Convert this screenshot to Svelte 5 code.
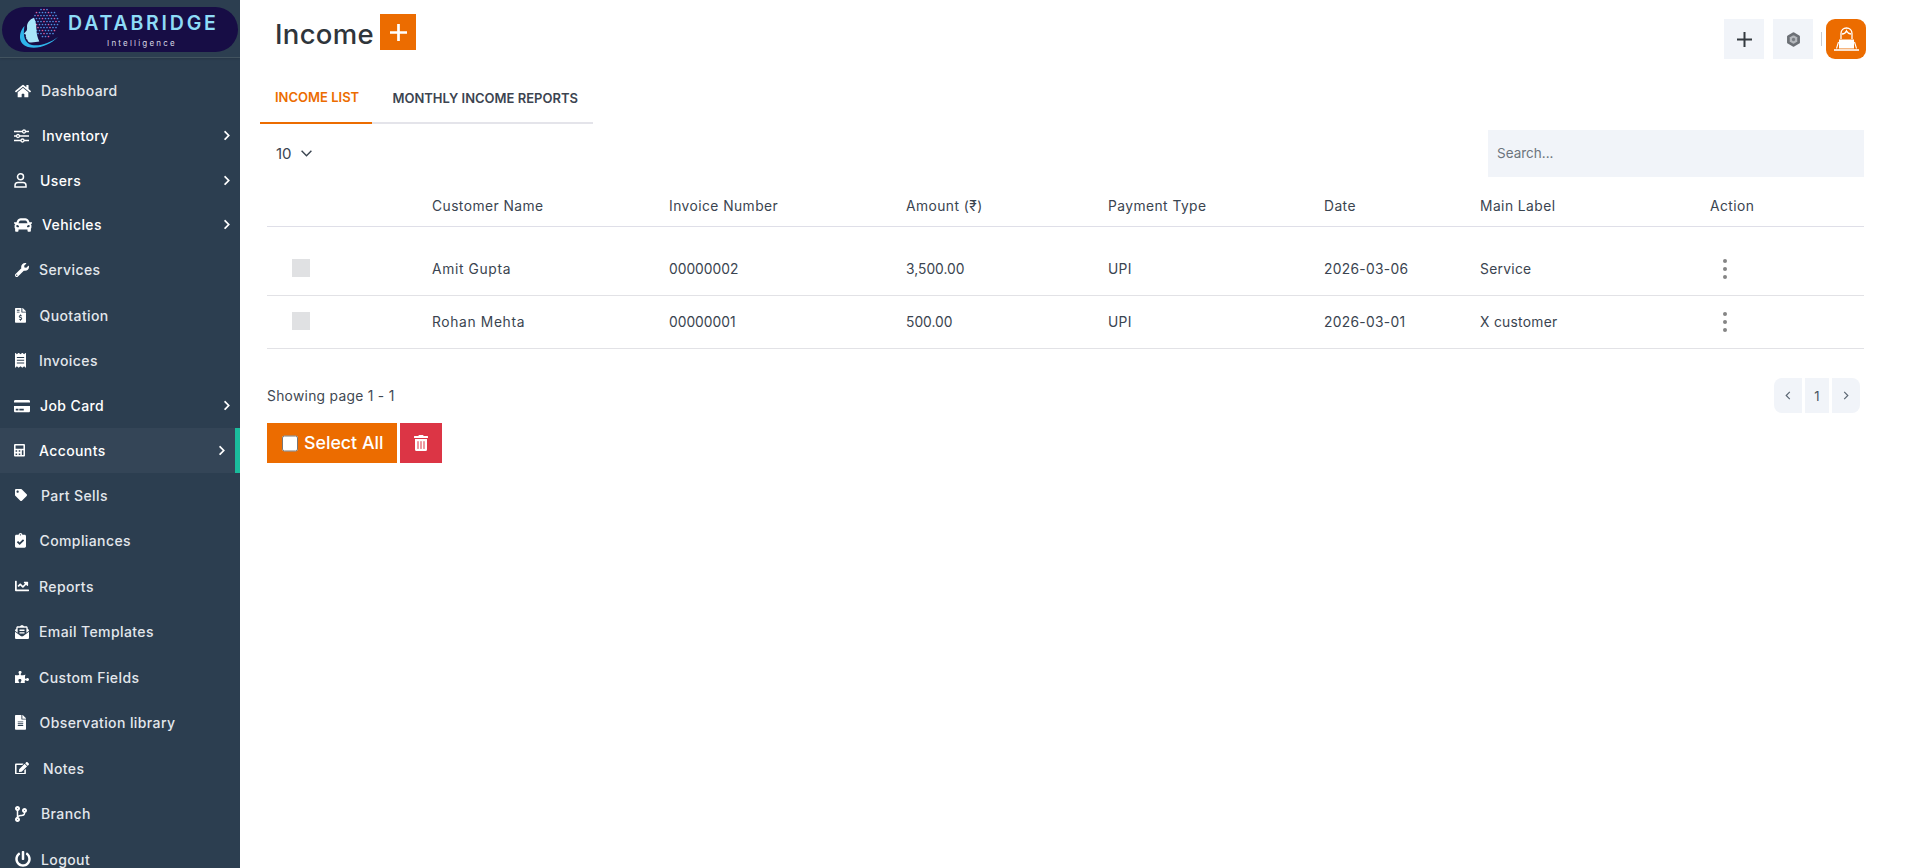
<script>
  const P = {
    home: ['0 0 576 512', 'M280.37 148.26L96 300.11V464a16 16 0 0 0 16 16l112.06-.29a16 16 0 0 0 15.92-16V368a16 16 0 0 1 16-16h64a16 16 0 0 1 16 16v95.64a16 16 0 0 0 16 16.05L464 480a16 16 0 0 0 16-16V300L295.67 148.26a12.19 12.19 0 0 0-15.3 0zM571.6 251.47L488 182.56V44.05a12 12 0 0 0-12-12h-56a12 12 0 0 0-12 12v72.61L318.47 43a48 48 0 0 0-61 0L4.34 251.47a12 12 0 0 0-1.6 16.9l25.5 31A12 12 0 0 0 45.15 301l235.22-193.74a12.19 12.19 0 0 1 15.3 0L530.9 301a12 12 0 0 0 16.9-1.6l25.5-31a12 12 0 0 0-1.7-16.93z'],
    car: ['0 0 512 512', 'M499.99 176h-59.87l-16.64-41.6C406.38 91.63 365.57 64 319.5 64h-127c-46.06 0-86.88 27.63-103.99 70.4L71.87 176H12.01C4.2 176-1.53 183.34.37 190.91l6 24C7.7 220.25 12.5 224 18.01 224h20.07C24.65 235.73 16 252.78 16 272v48c0 16.12 6.16 30.67 16 41.93V416c0 17.67 14.33 32 32 32h32c17.67 0 32-14.33 32-32v-32h256v32c0 17.67 14.33 32 32 32h32c17.67 0 32-14.33 32-32v-54.07c9.84-11.25 16-25.8 16-41.93v-48c0-19.22-8.65-36.27-22.07-48H494c5.51 0 10.31-3.75 11.64-9.09l6-24c1.89-7.57-3.84-14.91-11.65-14.91zm-352.06-17.83c7.29-18.22 24.94-30.17 44.57-30.17h127c19.63 0 37.28 11.95 44.57 30.17L384 208H128l19.93-49.83zM96 319.8c-19.2 0-32-12.76-32-31.9S76.8 256 96 256s48 28.71 48 47.85-28.8 15.95-48 15.95zm320 0c-19.2 0-48 3.19-48-15.95S396.8 256 416 256s32 12.76 32 31.9-12.8 31.9-32 31.9z'],
    wrench: ['0 0 512 512', 'M507.73 109.1c-2.24-9.03-13.54-12.09-20.12-5.51l-74.36 74.36-67.88-11.31-11.31-67.88 74.36-74.36c6.62-6.62 3.43-17.9-5.66-20.16-47.38-11.74-99.55.91-136.58 37.93-39.64 39.64-50.55 97.1-34.05 147.2L18.74 402.76c-24.99 24.99-24.99 65.51 0 90.5 24.99 24.99 65.51 24.99 90.5 0l213.21-213.21c50.12 16.71 107.47 5.68 147.37-34.22 37.07-37.07 49.7-89.32 37.91-136.73zM64 472c-13.25 0-24-10.75-24-24 0-13.26 10.75-24 24-24s24 10.74 24 24c0 13.25-10.75 24-24 24z'],
    quote: ['0 0 384 512', 'M377 105L279.1 7c-4.5-4.5-10.6-7-17-7H256v128h128v-6.1c0-6.3-2.5-12.4-7-16.9zm-153 31V0H24C10.7 0 0 10.7 0 24v464c0 13.3 10.7 24 24 24h336c13.3 0 24-10.7 24-24V160H248c-13.2 0-24-10.8-24-24zM64 72c0-4.42 3.58-8 8-8h80c4.42 0 8 3.58 8 8v16c0 4.42-3.58 8-8 8H72c-4.42 0-8-3.58-8-8V72zm0 80v-16c0-4.42 3.58-8 8-8h80c4.42 0 8 3.58 8 8v16c0 4.42-3.58 8-8 8H72c-4.42 0-8-3.58-8-8zm144 263.88V440c0 4.42-3.58 8-8 8h-16c-4.42 0-8-3.58-8-8v-24.29c-11.29-.58-22.27-4.52-31.37-11.35-3.9-2.93-4.1-8.77-.57-12.14l11.75-11.21c2.77-2.64 6.89-2.76 10.13-.73 3.87 2.42 8.26 3.72 12.82 3.72h28.11c6.5 0 11.8-5.92 11.8-13.19 0-5.95-3.61-11.19-8.77-12.73l-45-13.5c-18.59-5.58-31.58-23.42-31.58-43.39 0-24.52 19.05-44.44 42.67-45.07V232c0-4.42 3.58-8 8-8h16c4.42 0 8 3.58 8 8v24.29c11.29.58 22.27 4.51 31.37 11.35 3.9 2.93 4.1 8.77.57 12.14l-11.75 11.21c-2.77 2.64-6.89 2.76-10.13.73-3.87-2.43-8.26-3.72-12.82-3.72h-28.11c-6.5 0-11.8 5.92-11.8 13.19 0 5.95 3.61 11.19 8.77 12.73l45 13.5c18.59 5.58 31.58 23.42 31.58 43.39 0 24.53-19.05 44.44-42.67 45.07z'],
    receipt: ['0 0 384 512', 'M358.4 3.2L320 48 265.6 3.2a15.9 15.9 0 0 0-19.2 0L192 48 137.6 3.2a15.9 15.9 0 0 0-19.2 0L64 48 25.6 3.2C15-4.7 0 2.8 0 16v480c0 13.2 15 20.7 25.6 12.8L64 464l54.4 44.8a15.9 15.9 0 0 0 19.2 0L192 464l54.4 44.8a15.9 15.9 0 0 0 19.2 0L320 464l38.4 44.8c10.5 7.9 25.6.4 25.6-12.8V16c0-13.2-15-20.7-25.6-12.8zM320 360c0 4.4-3.6 8-8 8H72c-4.4 0-8-3.6-8-8v-16c0-4.4 3.6-8 8-8h240c4.4 0 8 3.6 8 8v16zm0-96c0 4.4-3.6 8-8 8H72c-4.4 0-8-3.6-8-8v-16c0-4.4 3.6-8 8-8h240c4.4 0 8 3.6 8 8v16zm0-96c0 4.4-3.6 8-8 8H72c-4.4 0-8-3.6-8-8v-16c0-4.4 3.6-8 8-8h240c4.4 0 8 3.6 8 8v16z'],
    card: ['0 0 576 512', 'M0 432c0 26.5 21.5 48 48 48h480c26.5 0 48-21.5 48-48V256H0v176zm192-68c0-6.6 5.4-12 12-12h136c6.6 0 12 5.4 12 12v40c0 6.6-5.4 12-12 12H204c-6.6 0-12-5.4-12-12v-40zm-128 0c0-6.6 5.4-12 12-12h72c6.6 0 12 5.4 12 12v40c0 6.6-5.4 12-12 12H76c-6.6 0-12-5.4-12-12v-40zM576 80v48H0V80c0-26.5 21.5-48 48-48h480c26.5 0 48 21.5 48 48z'],
    calc: ['0 0 448 512', 'M400 0H48C22.4 0 0 22.4 0 48v416c0 25.6 22.4 48 48 48h352c25.6 0 48-22.4 48-48V48c0-25.6-22.4-48-48-48zM128 435.2c0 6.4-6.4 12.8-12.8 12.8H76.8c-6.4 0-12.8-6.4-12.8-12.8v-38.4c0-6.4 6.4-12.8 12.8-12.8h38.4c6.4 0 12.8 6.4 12.8 12.8v38.4zm0-128c0 6.4-6.4 12.8-12.8 12.8H76.8c-6.4 0-12.8-6.4-12.8-12.8v-38.4c0-6.4 6.4-12.8 12.8-12.8h38.4c6.4 0 12.8 6.4 12.8 12.8v38.4zm128 128c0 6.4-6.4 12.8-12.8 12.8h-38.4c-6.4 0-12.8-6.4-12.8-12.8v-38.4c0-6.4 6.4-12.8 12.8-12.8h38.4c6.4 0 12.8 6.4 12.8 12.8v38.4zm0-128c0 6.4-6.4 12.8-12.8 12.8h-38.4c-6.4 0-12.8-6.4-12.8-12.8v-38.4c0-6.4 6.4-12.8 12.8-12.8h38.4c6.4 0 12.8 6.4 12.8 12.8v38.4zm128 128c0 6.4-6.4 12.8-12.8 12.8h-38.4c-6.4 0-12.8-6.4-12.8-12.8V268.8c0-6.4 6.4-12.8 12.8-12.8h38.4c6.4 0 12.8 6.4 12.8 12.8v166.4zm0-256c0 6.4-6.4 12.8-12.8 12.8H76.8c-6.4 0-12.8-6.4-12.8-12.8V76.8C64 70.4 70.4 64 76.8 64h294.4c6.4 0 12.8 6.4 12.8 12.8v102.4z'],
    tag: ['0 0 512 512', 'M0 252.118V48C0 21.49 21.49 0 48 0h204.118a48 48 0 0 1 33.941 14.059l211.882 211.882c18.745 18.745 18.745 49.137 0 67.882L293.823 497.941c-18.745 18.745-49.137 18.745-67.882 0L14.059 286.059A48 48 0 0 1 0 252.118zM112 64c-26.51 0-48 21.49-48 48s21.49 48 48 48 48-21.49 48-48-21.49-48-48-48z'],
    clip: ['0 0 384 512', 'M336 64h-80c0-35.3-28.7-64-64-64s-64 28.7-64 64H48C21.5 64 0 85.5 0 112v352c0 26.5 21.5 48 48 48h288c26.5 0 48-21.5 48-48V112c0-26.5-21.5-48-48-48zM192 40c13.3 0 24 10.7 24 24s-10.7 24-24 24-24-10.7-24-24 10.7-24 24-24zm121.2 231.8l-143 141.8c-4.7 4.7-12.3 4.6-17-.1l-82.6-83.3c-4.7-4.7-4.6-12.3.1-17L99.1 285c4.7-4.7 12.3-4.6 17 .1l46 46.4 106-105.2c4.7-4.7 12.3-4.6 17 .1l28.2 28.4c4.7 4.8 4.6 12.3-.1 17z'],
    chart: ['0 0 512 512', 'M496 384H64V80c0-8.84-7.16-16-16-16H16C7.16 64 0 71.16 0 80v336c0 17.67 14.33 32 32 32h464c8.84 0 16-7.16 16-16v-32c0-8.84-7.16-16-16-16zM464 96H345.94c-21.38 0-32.09 25.85-16.97 40.97l32.4 32.4L288 242.75l-73.37-73.37c-12.5-12.5-32.76-12.5-45.25 0l-68.69 68.69c-6.25 6.25-6.25 16.38 0 22.63l22.62 22.62c6.25 6.25 16.38 6.25 22.63 0L192 237.25l73.37 73.37c12.5 12.5 32.76 12.5 45.25 0l96-96 32.4 32.4c15.12 15.12 40.97 4.41 40.97-16.97V112c0-8.84-7.16-16-16-16z'],
    mail: ['0 0 512 512', 'M176 216h160c8.84 0 16-7.16 16-16v-16c0-8.84-7.16-16-16-16H176c-8.84 0-16 7.16-16 16v16c0 8.84 7.16 16 16 16zm-16 80c0 8.84 7.16 16 16 16h160c8.84 0 16-7.16 16-16v-16c0-8.84-7.16-16-16-16H176c-8.84 0-16 7.16-16 16v16zm96 121.13c-16.42 0-32.84-5.06-46.86-15.19L0 250.86V464c0 26.51 21.49 48 48 48h416c26.51 0 48-21.49 48-48V250.86L302.86 401.94c-14.02 10.12-30.44 15.19-46.86 15.19zm237.61-254.18c-8.85-6.94-17.24-13.47-29.61-22.81V96c0-26.51-21.49-48-48-48h-77.55c-3.04-2.2-5.87-4.26-9.04-6.56C312.6 29.17 279.2-.35 256 0c-23.2-.35-56.59 29.17-73.41 41.44-3.17 2.3-6 4.36-9.04 6.56H96c-26.51 0-48 21.49-48 48v44.14c-12.37 9.33-20.76 15.87-29.61 22.81A47.995 47.995 0 0 0 0 200.72v10.65l96 69.35V96h320v184.72l96-69.35v-10.65c0-14.74-6.78-28.67-18.39-37.77z'],
    puzzle: ['0 0 576 512', 'M519.442 288.651c-41.519 0-59.5 31.593-82.058 31.593C377.409 320.244 432 144 432 144s-196.288 80-196.288-3.297c0-35.827 36.288-46.25 36.288-85.985C272 19.216 243.885 0 210.539 0c-34.654 0-66.366 18.891-66.366 56.346 0 41.364 31.711 59.277 31.711 81.75C175.885 207.719 0 166.758 0 166.758v333.237s178.635 41.047 178.635-28.662c0-22.473-40-40.107-40-81.471 0-37.456 29.25-56.346 63.577-56.346 33.673 0 61.788 19.216 61.788 54.717 0 39.735-36.288 50.158-36.288 85.985 0 60.803 129.675 25.73 181.23 25.73 0 0-34.725-120.101 25.827-120.101 35.962 0 46.423 36.152 86.308 36.152C556.712 416 576 387.99 576 354.443c0-34.199-18.962-65.792-56.558-65.792z'],
    file: ['0 0 384 512', 'M224 136V0H24C10.7 0 0 10.7 0 24v464c0 13.3 10.7 24 24 24h336c13.3 0 24-10.7 24-24V160H248c-13.2 0-24-10.8-24-24zm64 236c0 6.6-5.4 12-12 12H108c-6.6 0-12-5.4-12-12v-8c0-6.6 5.4-12 12-12h168c6.6 0 12 5.4 12 12v8zm0-64c0 6.6-5.4 12-12 12H108c-6.6 0-12-5.4-12-12v-8c0-6.6 5.4-12 12-12h168c6.6 0 12 5.4 12 12v8zm0-72v8c0 6.6-5.4 12-12 12H108c-6.6 0-12-5.4-12-12v-8c0-6.6 5.4-12 12-12h168c6.6 0 12 5.4 12 12zm96-114.1v6.1H256V0h6.1c6.4 0 12.5 2.5 17 7l97.9 98c4.5 4.5 7 10.6 7 16.9z'],
    edit: ['0 0 576 512', 'M402.6 83.2l90.2 90.2c3.8 3.8 3.8 10 0 13.8L274.4 405.6l-92.8 10.3c-12.4 1.4-22.9-9.1-21.5-21.5l10.3-92.8L388.8 83.2c3.8-3.8 10-3.8 13.8 0zm162-22.9l-48.8-48.8c-15.2-15.2-39.9-15.2-55.2 0l-35.4 35.4c-3.8 3.8-3.8 10 0 13.8l90.2 90.2c3.8 3.8 10 3.8 13.8 0l35.4-35.4c15.2-15.3 15.2-40 0-55.2zM384 346.2V448H64V128h229.8c3.2 0 6.2-1.3 8.5-3.5l40-40c7.6-7.6 2.2-20.5-8.5-20.5H48C21.5 64 0 85.5 0 112v352c0 26.5 21.5 48 48 48h352c26.5 0 48-21.5 48-48V306.2c0-10.7-12.9-16-20.5-8.5l-40 40c-2.2 2.3-3.5 5.3-3.5 8.5z'],
    branch: ['0 0 384 512', 'M384 144c0-44.2-35.8-80-80-80s-80 35.8-80 80c0 36.4 24.3 67.1 57.5 76.8-.6 16.1-4.2 28.5-11 36.9-15.4 19.2-49.3 22.4-85.2 25.7-28.2 2.6-57.4 5.4-81.3 16.9v-144c32.5-10.2 56-40.5 56-76.3 0-44.2-35.8-80-80-80S0 35.8 0 80c0 35.8 23.5 66.1 56 76.3v199.3C23.5 365.9 0 396.2 0 432c0 44.2 35.8 80 80 80s80-35.8 80-80c0-34-21.2-63.1-51.2-74.6 3.1-5.2 7.8-9.8 14.9-13.4 16.2-8.2 40.4-10.4 66.1-12.8 42.2-3.9 90-8.4 118.2-43.4 14-17.4 21.1-39.8 21.6-67.9 31.6-10.8 54.4-40.7 54.4-75.9zM80 64c8.8 0 16 7.2 16 16s-7.2 16-16 16-16-7.2-16-16 7.2-16 16-16zm0 384c-8.8 0-16-7.2-16-16s7.2-16 16-16 16 7.2 16 16-7.2 16-16 16zm224-320c8.8 0 16 7.2 16 16s-7.2 16-16 16-16-7.2-16-16 7.2-16 16-16z'],
    power: ['0 0 512 512', 'M400 54.1c63 45 104 118.6 104 201.9 0 136.8-110.8 247.7-247.5 248C120 504.3 8.2 393 8 256.4 7.9 173.1 48.9 99.3 111.8 54.2c11.7-8.3 28-4.8 35 7.7L162.6 90c5.9 10.5 3.1 23.8-6.6 31-41.5 30.8-68 79.6-68 134.9-.1 92.3 74.5 168.1 168 168.1 91.6 0 168.6-74.2 168-169.1-.3-51.8-24.7-101.8-68.1-134-9.7-7.2-12.4-20.5-6.5-30.9l15.8-28.1c7-12.4 23.2-16.1 34.8-7.8zM296 264V24c0-13.3-10.7-24-24-24h-32c-13.3 0-24 10.7-24 24v240c0 13.3 10.7 24 24 24h32c13.3 0 24-10.7 24-24z'],
  };
  const chevron = 'M285.476 272.971L91.132 467.314c-9.373 9.373-24.569 9.373-33.941 0l-22.667-22.667c-9.357-9.357-9.375-24.522-.04-33.901L188.505 256 34.484 101.255c-9.335-9.379-9.317-24.544.04-33.901l22.667-22.667c9.373-9.373 24.569-9.373 33.941 0L285.475 239.03c9.373 9.372 9.373 24.568.001 33.941z';
  const trash = 'M32 464a48 48 0 0 0 48 48h288a48 48 0 0 0 48-48V128H32zm272-256a16 16 0 0 1 32 0v224a16 16 0 0 1-32 0zm-96 0a16 16 0 0 1 32 0v224a16 16 0 0 1-32 0zm-96 0a16 16 0 0 1 32 0v224a16 16 0 0 1-32 0zM432 32H312l-9.4-18.7A24 24 0 0 0 281.1 0H166.8a23.72 23.72 0 0 0-21.4 13.3L136 32H16A16 16 0 0 0 0 48v32a16 16 0 0 0 16 16h416a16 16 0 0 0 16-16V48a16 16 0 0 0-16-16z';

  const nav = [
    { label: 'Dashboard', icon: 'home', x: 15, w: 16, tx: 41 },
    { label: 'Inventory', icon: 'sliders', x: 14, w: 15, tx: 42, sub: true },
    { label: 'Users', icon: 'user', x: 14, w: 13, tx: 40, sub: true },
    { label: 'Vehicles', icon: 'car', x: 14, w: 18, tx: 42, sub: true },
    { label: 'Services', icon: 'wrench', x: 15, w: 14, tx: 39 },
    { label: 'Quotation', icon: 'quote', x: 15, w: 11, tx: 39.5 },
    { label: 'Invoices', icon: 'receipt', x: 15, w: 11, tx: 39 },
    { label: 'Job Card', icon: 'card', x: 14, w: 16, tx: 40, sub: true },
    { label: 'Accounts', icon: 'calc', x: 14, w: 11, tx: 39, sub: true, active: true },
    { label: 'Part Sells', icon: 'tag', x: 15, w: 12, tx: 41 },
    { label: 'Compliances', icon: 'clip', x: 15, w: 11, tx: 39.5 },
    { label: 'Reports', icon: 'chart', x: 15, w: 14, tx: 39 },
    { label: 'Email Templates', icon: 'mail', x: 15, w: 14, tx: 39 },
    { label: 'Custom Fields', icon: 'puzzle', x: 15, w: 14, tx: 39 },
    { label: 'Observation library', icon: 'file', x: 15, w: 11, tx: 39.5 },
    { label: 'Notes', icon: 'edit', x: 15, w: 14, tx: 43 },
    { label: 'Branch', icon: 'branch', x: 15, w: 12, tx: 41 },
    { label: 'Logout', icon: 'power', x: 15, w: 16, tx: 41 },
  ];

  const headers = ['', 'Customer Name', 'Invoice Number', 'Amount (₹)', 'Payment Type', 'Date', 'Main Label', 'Action'];
  const rows = [
    ['Amit Gupta', '00000002', '3,500.00', 'UPI', '2026-03-06', 'Service'],
    ['Rohan Mehta', '00000001', '500.00', 'UPI', '2026-03-01', 'X customer'],
  ];
  const cellClass = ['name', 'num', 'num', '', '', ''];

  const dots = [];
  for (let r = 0; r < 10; r++) {
    for (let c = 0; c < 10; c++) {
      const x = 32 + c * 3 + (r % 2) * 1.5;
      const y = 9.5 + r * 3;
      const dx = x - 45, dy = y - 23;
      if (dx * dx + dy * dy < 205 && x - 36 > (y - 24) * 0.35 - 2) {
        dots.push({ x, y, pink: (r * 3 + c * 5) % 4 === 0 });
      }
    }
  }
</script>

<div class="app">
  <aside class="sidebar">
    <div class="brand">
      <div class="pill">
        <svg class="mark" viewBox="15 8 60 44" aria-hidden="true">
          {#each dots as d}
            <circle cx={d.x} cy={d.y} r="0.85" fill={d.pink ? '#d9609f' : '#4f8fe0'} />
          {/each}
          <path d="M34 18c-4 1-6.500 4-7 8 0 2 .3 3-.3 4.500l-2.700 3c0 .8 1.500 1 2 1.300-.2 1.200-.5 2 .3 2.700-.3 1 0 1.800 1 2 .5 2.500 1.700 3 4 3 3 0 6-1 8-1-2-4-3-9-3-14 0-4-1-7-2.300-9.500z" fill="#a9e6f9" />
          <path d="M24.500 26C18 33 18 44 28 47c10 2.500 22-2 30-10-8 6-18 9.500-26 8-7-1.500-9.500-9-7.500-19z" fill="#2fb5ea" />
        </svg>
        <div class="wordmark">
          <span class="wm-main">DATABRIDGE</span>
          <span class="wm-sub">Intelligence</span>
        </div>
      </div>
    </div>
    <nav class="nav">
      {#each nav as item}
        <div class="item" class:sub={item.sub} class:active={item.active}>
          <span class="ico" style="margin-left:{item.x}px;width:{item.w}px">
            {#if item.icon === 'sliders'}
              <svg viewBox="0 0 15 14" fill="none" stroke="#fff" stroke-width="1.3">
                <path d="M0 2.500h8.500M11.500 2.500H15M0 7h2.500M5.500 7H15M0 11.500h7M10 11.500h5" />
                <circle cx="10" cy="2.500" r="1.500" /><circle cx="4" cy="7" r="1.500" /><circle cx="8.500" cy="11.500" r="1.500" />
              </svg>
            {:else if item.icon === 'user'}
              <svg viewBox="0 0 13 15" fill="none" stroke="#fff" stroke-width="1.500">
                <circle cx="6.500" cy="3.800" r="3" />
                <path d="M1 14v-1.500C1 10.500 2.500 9.500 4 9.500h5c1.500 0 3 1 3 3V14z" />
              </svg>
            {:else}
              <svg viewBox={P[item.icon][0]} fill="#fff"><path d={P[item.icon][1]} /></svg>
            {/if}
          </span>
          <span class="lbl" style="margin-left:{item.tx - item.x - item.w}px">{item.label}</span>
          {#if item.sub}
            <svg class="chev" viewBox="0 0 320 512" fill="#fff"><path d={chevron} /></svg>
          {/if}
        </div>
      {/each}
    </nav>
  </aside>

  <main class="main">
    <header class="top">
      <h1>Income</h1>
      <button class="add" aria-label="Add income">
        <svg viewBox="0 0 17 17" fill="none" stroke="#fff" stroke-width="2.700"><path d="M8.500 0v17M0 8.500h17" /></svg>
      </button>
      <div class="tools">
        <button class="tool" aria-label="Add">
          <svg viewBox="0 0 15 15" width="15" height="15" fill="none" stroke="#343a40" stroke-width="2"><path d="M7.500 0v15M0 7.500h15" /></svg>
        </button>
        <button class="tool" aria-label="Settings">
          <svg viewBox="0 0 20 20" width="15" height="15">
            <polygon points="10,2.200 16.800,6.100 16.800,13.900 10,17.800 3.200,13.900 3.200,6.100" fill="#b4b7bc" stroke="#6c7076" stroke-width="3.600" stroke-linejoin="round" />
            <circle cx="10" cy="10" r="2.200" fill="#7a7e84" />
          </svg>
        </button>
        <span class="sep"></span>
        <div class="avatar">
          <svg viewBox="0 0 40 40" width="40" height="40">
            <path d="M15 20v-5.500c0-3.500 2.500-5.500 5.500-5.500s5.500 2 5.500 5.500V20" fill="none" stroke="#fff" stroke-width="1.300" />
            <path d="M16 15c2.200 0 3.700-1.200 4.500-3 .8 1.500 2.500 2.700 4.500 3" fill="none" stroke="#fff" stroke-width="1.500" />
            <path d="M13 20.500h15v9H13z" fill="#fff" />
            <path d="M12.500 23l-2 6.500M28.500 23l2 6.500" fill="none" stroke="#fff" stroke-width="1.100" />
            <path d="M8 30.200h25v1.600H8z" fill="#fff" />
          </svg>
        </div>
      </div>
    </header>

    <div class="tabs">
      <button class="tab on">INCOME LIST</button>
      <button class="tab">MONTHLY INCOME REPORTS</button>
    </div>

    <div class="controls">
      <div class="size">
        <span>10</span>
        <svg viewBox="0 0 11 7" width="11" height="7" fill="none" stroke="#3a4450" stroke-width="1.400"><path d="M.6.8l4.900 4.900L10.400.8" /></svg>
      </div>
      <input class="search" placeholder="Search..." />
    </div>

    <table class="tbl">
      <colgroup>
        <col class="c0" /><col class="c1" /><col class="c1" /><col class="c3" /><col class="c4" /><col class="c5" /><col class="c6" /><col />
      </colgroup>
      <thead>
        <tr>{#each headers as h}<th>{h}</th>{/each}</tr>
      </thead>
      <tbody>
        <tr class="spacer"><td colspan="8"></td></tr>
        {#each rows as r}
          <tr>
            <td><input type="checkbox" class="rowcheck" /></td>
            {#each r as v, i}<td class={cellClass[i]}>{v}</td>{/each}
            <td>
              <span class="kebab"><i></i><i></i><i></i></span>
            </td>
          </tr>
        {/each}
      </tbody>
    </table>

    <div class="foot">
      <span class="info">Showing page 1 - 1</span>
      <div class="pager">
        <button class="pg first" aria-label="Previous">
          <svg viewBox="0 0 6 10" width="6" height="9" fill="none" stroke="#5a6672" stroke-width="1.300"><path d="M5 1L1 5l4 4" /></svg>
        </button>
        <button class="pg num">1</button>
        <button class="pg last" aria-label="Next">
          <svg viewBox="0 0 6 10" width="6" height="9" fill="none" stroke="#5a6672" stroke-width="1.300"><path d="M1 1l4 4-4 4" /></svg>
        </button>
      </div>
    </div>

    <div class="actions">
      <label class="selall"><input type="checkbox" /><span>Select All</span></label>
      <button class="del" aria-label="Delete">
        <svg viewBox="0 0 448 512" width="14" height="16" fill="#fff"><path d={trash} /></svg>
      </button>
    </div>
  </main>
</div>

<style>
  :global(body) {
    margin: 0;
    background: #fff;
  }
  .app {
    display: flex;
    height: 100vh;
    overflow: hidden;
    font-family: Inter, "Noto Sans", sans-serif;
    color: #3a4450;
  }
  .sidebar {
    flex: 0 0 240px;
    width: 240px;
    background: #2c3e50;
    overflow: hidden;
    position: relative;
  }
  .brand {
    height: 58px;
    box-sizing: border-box;
    padding: 7px 2px 0;
    border-bottom: 1px solid #42535f;
    box-shadow: 0 1px 2px rgba(0, 0, 0, .12);
  }
  .pill {
    height: 45px;
    border-radius: 23px;
    background: #170d45;
    display: flex;
    align-items: center;
    position: relative;
  }
  .mark {
    width: 60px;
    height: 44px;
    flex: none;
    margin-left: 13px;
  }
  .wordmark {
    display: flex;
    flex-direction: column;
    align-items: center;
    margin-left: -7px;
    width: 148px;
    line-height: 1;
  }
  .wm-main {
    font-size: 19.500px;
    font-weight: 600;
    letter-spacing: 2.800px;
    margin-right: -2.800px;
    color: #8edcf7;
    margin-top: 2px;
    white-space: nowrap;
  }
  .wm-sub {
    font-size: 8px;
    letter-spacing: 2.200px;
    color: #d8d8e4;
    margin-top: 5px;
  }
  .nav {
    padding-top: 10px;
  }
  .item {
    height: 45.500px;
    display: flex;
    align-items: center;
    font-size: 14px;
    font-weight: 450;
    letter-spacing: .4px;
    color: #e3e7ec;
    position: relative;
  }
  .item.sub {
    height: 44.500px;
    color: #fff;
  }
  .item.active {
    background: #344557;
    color: #fff;
  }
  .item.active::after {
    content: "";
    position: absolute;
    right: 0;
    top: 0;
    bottom: 0;
    width: 5px;
    background: #1abc9c;
  }
  .ico {
    display: flex;
    flex: none;
    align-items: center;
    justify-content: center;
  }
  .ico svg {
    width: 100%;
    height: auto;
    max-height: 18px;
    display: block;
  }
  .chev {
    position: absolute;
    right: 9px;
    top: 50%;
    width: 8px;
    height: 11px;
    margin-top: -5.500px;
  }
  .item.active .chev {
    right: 14px;
  }
  .main {
    flex: 1;
    min-width: 0;
    box-sizing: border-box;
    padding: 0 55px 0 20px;
  }
  button {
    border: 0;
    padding: 0;
    font: inherit;
    color: inherit;
    background: none;
  }
  .top {
    display: flex;
    align-items: flex-start;
    padding-top: 14px;
    height: 59px;
    box-sizing: border-box;
  }
  h1 {
    margin: 0 0 0 15px;
    font-size: 27.500px;
    font-weight: 500;
    line-height: 40px;
    letter-spacing: .3px;
    color: #2f353b;
    width: 90px;
  }
  .add {
    width: 36px;
    height: 36px;
    margin-left: 15px;
    background: #ec6c00;
    display: flex;
    align-items: center;
    justify-content: center;
  }
  .add svg {
    width: 17px;
    height: 17px;
  }
  .tools {
    margin-left: auto;
    margin-right: -2px;
    margin-top: 5px;
    display: flex;
    align-items: center;
  }
  .tool {
    width: 40px;
    height: 40px;
    margin-right: 9px;
    background: #f1f4f9;
    display: flex;
    align-items: center;
    justify-content: center;
  }
  .sep {
    width: 1px;
    height: 14px;
    background: #c9ccd1;
    margin: 0 4px 0 -1px;
  }
  .avatar {
    width: 40px;
    height: 40px;
    border-radius: 9px;
    background: #ec6c00;
  }
  .tabs {
    display: flex;
    width: 333px;
    height: 50px;
    margin-top: 15px;
    box-sizing: border-box;
    border-bottom: 2px solid #e4e4ea;
  }
  .tab {
    height: 50px;
    font-size: 13px;
    font-weight: 600;
    letter-spacing: 0;
    color: #3c4450;
    padding: 0 15px 3px 20px;
    white-space: nowrap;
    box-sizing: border-box;
  }
  .tab.on {
    width: 113px;
    padding: 0 0 2px 15px;
    text-align: left;
    color: #ec6c00;
    border-bottom: 2px solid #ec6c00;
  }
  .controls {
    display: flex;
    align-items: center;
    justify-content: space-between;
    margin-top: 6px;
  }
  .size {
    display: flex;
    align-items: center;
    gap: 9px;
    margin-left: 16px;
    font-size: 15px;
    color: #3a4450;
  }
  .search {
    width: 376px;
    height: 47px;
    border: 0;
    outline: 0;
    background: #f1f4f9;
    box-sizing: border-box;
    padding: 0 9px 2px;
    font: inherit;
    font-size: 13.500px;
    color: #3a4450;
  }
  .search::placeholder {
    color: #6c757d;
  }
  .tbl {
    table-layout: fixed;
    border-collapse: collapse;
    width: 1597px;
    margin: 9px 0 0 7px;
  }
  .c0 { width: 165px; }
  .c1 { width: 237px; }
  .c3 { width: 202px; }
  .c4 { width: 216px; }
  .c5 { width: 156px; }
  .c6 { width: 230px; }
  th {
    height: 40px;
    padding: 0;
    text-align: left;
    font-size: 13.800px;
    font-weight: 400;
    letter-spacing: .45px;
    color: #3a4450;
    border-bottom: 1px solid #dfdfe8;
  }
  td {
    height: 52px;
    padding: 0;
    font-size: 13.800px;
    letter-spacing: .3px;
    color: #3a4450;
    border-bottom: 1px solid #e2e2e6;
  }
  td.name {
    letter-spacing: .65px;
  }
  td.num {
    letter-spacing: 0;
  }
  .spacer td {
    height: 16px;
    border: 0;
  }
  .rowcheck {
    appearance: none;
    display: block;
    width: 18px;
    height: 18px;
    margin: -3px 0 0 25px;
    background: #e0e1e3;
  }
  .kebab {
    display: flex;
    flex-direction: column;
    gap: 4px;
    margin-left: 13px;
    width: 4px;
  }
  .kebab i {
    width: 4px;
    height: 4px;
    border-radius: 50%;
    background: #858585;
  }
  .foot {
    display: flex;
    align-items: center;
    justify-content: space-between;
    margin: 29px 4px 0 7px;
    height: 35px;
  }
  .info {
    font-size: 13.800px;
    letter-spacing: .3px;
    color: #3f4852;
  }
  .pager {
    display: flex;
    gap: 3px;
  }
  .pg {
    height: 35px;
    width: 28px;
    background: #f1f4f9;
    display: flex;
    align-items: center;
    justify-content: center;
    font-size: 13px;
    color: #4a5560;
  }
  .pg.num { width: 24px; }
  .pg.first { border-radius: 8px 0 0 8px; }
  .pg.last { border-radius: 0 8px 8px 0; }
  .actions {
    display: flex;
    gap: 3px;
    margin: 10px 0 0 7px;
  }
  .selall {
    width: 130px;
    height: 40px;
    box-sizing: border-box;
    padding-left: 15px;
    background: #ec6c00;
    color: #fff;
    font-size: 17.800px;
    font-weight: 450;
    display: flex;
    align-items: center;
    gap: 6px;
  }
  .selall span {
    padding-bottom: 2px;
  }
  .selall input {
    width: 16px;
    height: 17px;
    margin: 0;
  }
  .del {
    width: 42px;
    height: 40px;
    background: #dc3545;
    display: flex;
    align-items: center;
    justify-content: center;
  }
</style>
